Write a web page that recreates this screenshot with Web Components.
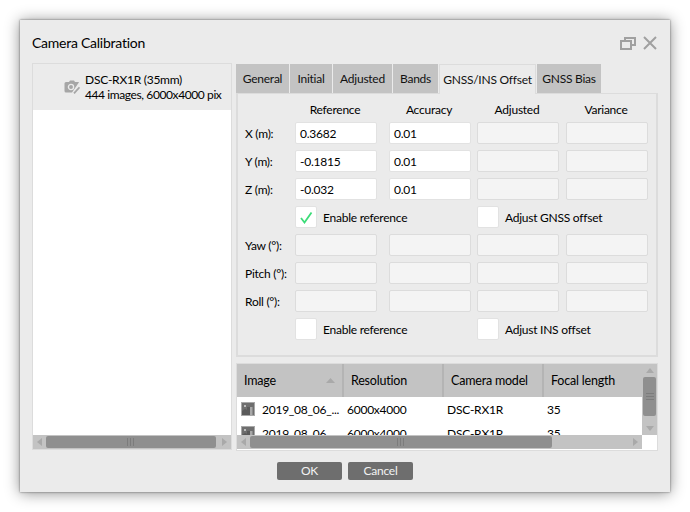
<!DOCTYPE html>
<html><head><meta charset="utf-8"><title>Camera Calibration</title>
<style>
html,body{margin:0;padding:0;background:#fff;}
body{font:12px/16px Lato,"Open Sans",sans-serif;color:#000;letter-spacing:-.25px;width:690px;height:512px;overflow:hidden;}
</style></head><body>
<cal-dialog title="Camera Calibration">
  <cam-list slot="left"></cam-list>
  <tab-bar slot="right"></tab-bar>
  <offset-form slot="right"></offset-form>
  <image-table slot="right"></image-table>
  <dlg-button slot="buttons">OK</dlg-button>
  <dlg-button slot="buttons">Cancel</dlg-button>
</cal-dialog>
<script>
function def(name,html){customElements.define(name,class extends HTMLElement{
  connectedCallback(){if(this.shadowRoot)return;const r=this.attachShadow({mode:'open'});r.innerHTML=typeof html==='function'?html(this):html;}
});}
def('scroll-bar',h=>{
  const v=h.hasAttribute('vertical');
  const grip=v?`<svg width="8" height="10"><path d="M0 1.500h8M0 4.500h8M0 7.500h8" stroke="#7c7c7c"/></svg>`:`<svg width="10" height="8"><path d="M1.500 0v8M4.500 0v8M7.500 0v8" stroke="#7c7c7c"/></svg>`;
  const a=v?`<svg width="8" height="5"><path d="M4 0l4 5H0z" fill="#a9a9a9"/></svg>`:`<svg width="5" height="8"><path d="M5 0v8L0 4z" fill="#a9a9a9"/></svg>`;
  const b=v?`<svg width="8" height="5"><path d="M0 0h8L4 5z" fill="#a9a9a9"/></svg>`:`<svg width="5" height="8"><path d="M0 0l5 4-5 4z" fill="#a9a9a9"/></svg>`;
  return `<style>
  :host{display:flex;flex:none;flex-direction:${v?'column':'row'};background:#c3c3c3;${v?'width:15px':'height:14px'};box-sizing:border-box}
  .e{flex:none;${v?'height:13px;width:15px':'width:13px;height:14px'};display:flex;align-items:center;justify-content:center}
  .t{flex:1;display:flex;${v?'flex-direction:column':''};min-${v?'height':'width'}:0}
  .th{background:#8f8f8f;border-radius:2px;display:flex;align-items:center;justify-content:center;${v?`height:39px;width:13px;margin:0 1px`:`flex:none;width:${h.getAttribute('thumb')}px;height:12px;margin:1px 0`}}
  </style><div class="e">${a}</div><div class="t"><div class="th">${grip}</div></div><div class="e">${b}</div>`;
});
def('cal-dialog',h=>`<style>
  :host{display:block;box-sizing:border-box;width:650px;height:472px;margin:20px;background:#ebebeb;box-shadow:0 0 2px #666,0 1px 14px rgba(0,0,0,.45);padding:0 12px}
  .head{height:40px;padding-top:3px;display:flex;align-items:center;justify-content:space-between}
  h1{margin:0;font:400 14px/20px Lato,"Open Sans",sans-serif;letter-spacing:-.25px;color:#000}
  .ic{display:flex;gap:7px;align-items:center;margin-right:1px}
  .main{display:grid;grid-template-columns:200px 422px;column-gap:4px;height:388px}
  .r{display:flex;flex-direction:column;min-width:0;padding-top:1px}
  .btns{display:flex;justify-content:center;gap:6px;margin-top:11px}
  </style>
  <div class="head"><h1>${h.getAttribute('title')}</h1><div class="ic">
  <svg width="16" height="13" fill="none" stroke="#a0a0a0" stroke-width="2"><path d="M5 3V1h10v7h-4"/><rect x="1" y="4" width="10" height="8"/></svg>
  <svg width="14" height="14" fill="none" stroke="#a0a0a0" stroke-width="2"><path d="M1 1l12 12M13 1L1 13"/></svg>
  </div></div>
  <div class="main"><slot name="left"></slot><div class="r"><slot name="right"></slot></div></div>
  <div class="btns"><slot name="buttons"></slot></div>`);
def('cam-list',`<style>
  :host{display:flex;flex-direction:column;border:1px solid #dcdcdc;height:387px;box-sizing:border-box;background:#fff}
  .row{height:46px;background:#ebebeb;display:flex;align-items:center;flex:none;padding-left:31px;gap:5px}
  .row svg{flex:none}
  .tx{line-height:15px;white-space:nowrap}
  .l2{letter-spacing:-.4px}
  .sp{flex:1}
  </style>
  <div class="row"><svg width="16" height="14" viewBox="0 0 16 14"><path fill="#a6a6a6" d="M2 2h3l1-1.500h4l1 1.500h3.500a1 1 0 0 1 .5.200L8 12.500H2a1.500 1.500 0 0 1-1.500-1.500V3.500A1.500 1.500 0 0 1 2 2z"/><circle cx="7" cy="7" r="2.600" fill="none" stroke="#ebebeb" stroke-width="1.300"/><path d="M10 13.300l5.500-6" stroke="#a6a6a6" stroke-width="1.800" fill="none"/></svg>
  <div class="tx">DSC-RX1R (35mm)<br><span class="l2">444 images, 6000x4000 pix</span></div></div>
  <div class="sp"></div>
  <scroll-bar thumb="170"></scroll-bar>`);
def('tab-bar',h=>{
  const tabs=[['General',53],['Initial',42],['Adjusted',59],['Bands',45],['GNSS/INS Offset',97],['GNSS Bias',64]];
  return `<style>
  :host{display:flex;gap:1px;height:29px;flex:none}
  .t{background:#c3c3c3;height:29px;padding-top:1px;display:flex;align-items:center;justify-content:center;box-sizing:border-box;white-space:nowrap;color:#111}
  .a{background:#ebebeb;border:1px solid #dcdcdc;border-bottom:0;height:30px;margin-bottom:-1px;position:relative;z-index:1;padding-bottom:1px}
  </style>`+tabs.map((t,i)=>`<div class="t${i==4?' a':''}" style="width:${t[1]}px">${t[0]}</div>`).join('');
});
def('form-input',h=>{
  const d=h.hasAttribute('disabled');
  return `<style>:host{display:block;height:22px;width:82px;box-sizing:border-box;border:1px solid ${d?'#dcdcdc':'#e2e2e2'};border-radius:2px;background:${d?'#f4f4f4':'#fff'};padding:1px 4px 0;line-height:20px}</style><slot></slot>`;
});
def('form-check',h=>`<style>
  :host{display:flex;align-items:center;gap:6px;height:22px;white-space:nowrap}
  .b{width:22px;height:22px;box-sizing:border-box;background:#fff;border:1px solid #e2e2e2;border-radius:2px;display:flex;align-items:center;justify-content:center;flex:none}
  .t{padding-top:2px}
  </style><div class="b">${h.hasAttribute('checked')?'<svg width="14" height="13" fill="none"><path d="M2 7l3.500 4.500L12.500 1.500" stroke="#3cdc78" stroke-width="1.800"/></svg>':''}</div><div class="t"><slot></slot></div>`);
def('offset-form',h=>{
  const inp=(v)=>v!==null?`<form-input>${v}</form-input>`:`<form-input disabled></form-input>`;
  const row=(l,a,b)=>`<div class="l">${l}</div>${inp(a)}${inp(b)}${inp(null)}${inp(null)}`;
  return `<style>
  :host{display:block;box-sizing:border-box;height:264px;flex:none;border:2px solid #dcdcdc;border-top:1px solid #dcdcdc;padding:9px 0 0 7px}
  .g{display:grid;grid-template-columns:50px 82px 94px 88px 89px;row-gap:6px;grid-auto-rows:22px}
  .g>*:nth-child(5n+3){margin-left:12px}
  .g>*:nth-child(5n+4){margin-left:6px}
  .g>*:nth-child(5n+5){margin-left:7px}
  .h{height:15px;text-align:center;line-height:13px;width:82px;padding-right:2px;box-sizing:border-box}
  .l{line-height:23px;height:22px;white-space:nowrap}
  .g2{display:flex;margin:0 0 4px 50px}
  .g2 .h:nth-child(2){margin-left:12px}.g2 .h:nth-child(3){margin-left:6px}.g2 .h:nth-child(4){margin-left:7px}
  .c{display:flex;margin:6px 0 6px 50px}
  .c form-check:first-child{width:182px}
  </style>
  <div class="g2"><div class="h">Reference</div><div class="h">Accuracy</div><div class="h">Adjusted</div><div class="h">Variance</div></div>
  <div class="g">${row('X (m):','0.3682','0.01')}${row('Y (m):','-0.1815','0.01')}${row('Z (m):','-0.032','0.01')}</div>
  <div class="c"><form-check checked>Enable reference</form-check><form-check>Adjust GNSS offset</form-check></div>
  <div class="g">${row('Yaw (°):',null,null)}${row('Pitch (°):',null,null)}${row('Roll (°):',null,null)}</div>
  <div class="c"><form-check>Enable reference</form-check><form-check>Adjust INS offset</form-check></div>`;
});
def('image-table',h=>{
  const cols=[['Image',107],['Resolution',100],['Camera model',100],['Focal length',98]];
  const thumb=`<svg width="14" height="14" viewBox="0 0 14 14" style="flex:none;margin-right:7px"><rect width="14" height="14" fill="#a8a8a8"/><rect x="1" y="1" width="12" height="12" fill="#6e6e6e"/><path d="M1 13V9l3-2 2 1V5h3v8z" fill="#5a5a5a"/><rect x="3" y="3" width="2" height="2" fill="#bcbcbc"/><path d="M9 13V5h2.500v8z" fill="#a8a8a8"/></svg>`;
  const row=(n)=>`<div class="row"><div class="c" style="width:107px;padding-left:4px">${thumb}<span>${n}</span></div><div class="c" style="width:100px;padding-left:3px"><span>6000x4000</span></div><div class="c" style="width:100px;padding-left:3px"><span>DSC-RX1R</span></div><div class="c" style="width:98px;padding-left:3px"><span>35</span></div></div>`;
  return `<style>
  :host{display:block;box-sizing:border-box;height:88px;margin-top:6px;flex:none;border:1px solid #dcdcdc;background:#fff}
  .top{display:flex;height:71px}
  .cols{width:405px;overflow:hidden;flex:none}
  .hd{display:flex;height:33px;background:#c3c3c3}
  .hc{box-sizing:border-box;border-right:2px solid #b4b4b4;display:flex;align-items:center;padding-left:7px;font-size:12.500px;letter-spacing:-.2px;position:relative;flex:none}
  .hc:last-child{border:0}
  .row{display:flex;height:24px;align-items:center;white-space:nowrap}
  .c{box-sizing:border-box;display:flex;align-items:center;flex:none;overflow:hidden}
  .c span{padding-top:1px}
  .rows{height:38px;overflow:hidden}
  .bot{display:flex}
  .corner{width:15px;background:#fff}
  .arr{position:absolute;right:7px;top:14px}
  </style>
  <div class="top"><div class="cols"><div class="hd">${cols.map((c,i)=>`<div class="hc" style="width:${c[1]}px">${c[0]}${i==0?'<svg class="arr" width="9" height="5"><path d="M4.500 0L9 5H0z" fill="#a9a9a9"/></svg>':''}</div>`).join('')}</div>
  <div class="rows">${row('2019_08_06_...')}${row('2019_08_06_...')}</div></div>
  <scroll-bar vertical></scroll-bar></div>
  <div class="bot"><scroll-bar thumb="302" style="width:405px"></scroll-bar><div class="corner"></div></div>`;
});
def('dlg-button',`<style>:host{display:flex;align-items:center;justify-content:center;width:65px;height:18px;box-sizing:border-box;background:#6e6e6e;color:#f2f2f2;border-radius:2px}</style><slot></slot>`);
</script>
</body></html>
